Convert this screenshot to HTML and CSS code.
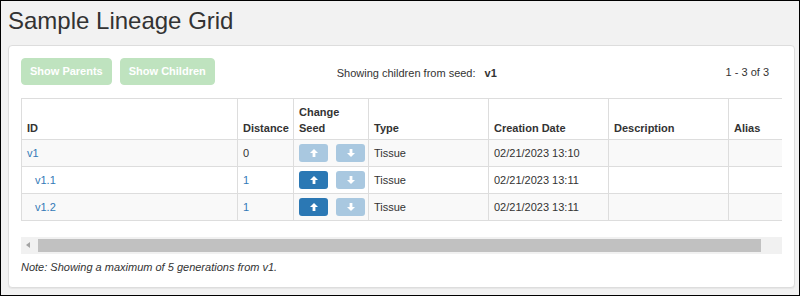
FILE: index.html
```html
<!DOCTYPE html>
<html lang="en">
<head>
    <meta charset="UTF-8">
    <title>Sample Lineage Grid</title>
    <link rel="stylesheet" href="styles.css">
</head>
<body>
    <h1 class="page-title">Sample Lineage Grid</h1>

    <div class="panel">
        <div class="toolbar">
            <button class="btn btn-success" disabled>Show Parents</button>
            <button class="btn btn-success" disabled>Show Children</button>
            <div class="seed-status">Showing children from seed: <b>v1</b></div>
            <div class="pager">1 - 3 of 3</div>
        </div>

        <div class="grid-wrap">
            <table class="lineage-table">
                <colgroup>
                    <col class="col-id">
                    <col class="col-distance">
                    <col class="col-seed">
                    <col class="col-type">
                    <col class="col-date">
                    <col class="col-desc">
                    <col class="col-alias">
                </colgroup>
                <thead>
                    <tr>
                        <th>ID</th>
                        <th>Distance</th>
                        <th>Change Seed</th>
                        <th>Type</th>
                        <th>Creation Date</th>
                        <th>Description</th>
                        <th>Alias</th>
                    </tr>
                </thead>
                <tbody>
                    <tr>
                        <td><a href="#">v1</a></td>
                        <td>0</td>
                        <td class="seed-cell">
                            <button class="seed-btn seed-btn-off" disabled>
                                <svg viewBox="0 0 8 8" width="8" height="8"><path d="M4 0 L8 4 H5.4 V8 H2.6 V4 H0 Z" fill="#fff"/></svg>
                            </button>
                            <button class="seed-btn seed-btn-off" disabled>
                                <svg viewBox="0 0 8 8" width="8" height="8"><path d="M4 8 L8 4 H5.4 V0 H2.6 V4 H0 Z" fill="#fff"/></svg>
                            </button>
                        </td>
                        <td>Tissue</td>
                        <td>02/21/2023 13:10</td>
                        <td></td>
                        <td></td>
                    </tr>
                    <tr>
                        <td><a href="#" class="child">v1.1</a></td>
                        <td><a href="#">1</a></td>
                        <td class="seed-cell">
                            <button class="seed-btn">
                                <svg viewBox="0 0 8 8" width="8" height="8"><path d="M4 0 L8 4 H5.4 V8 H2.6 V4 H0 Z" fill="#fff"/></svg>
                            </button>
                            <button class="seed-btn seed-btn-off" disabled>
                                <svg viewBox="0 0 8 8" width="8" height="8"><path d="M4 8 L8 4 H5.4 V0 H2.6 V4 H0 Z" fill="#fff"/></svg>
                            </button>
                        </td>
                        <td>Tissue</td>
                        <td>02/21/2023 13:11</td>
                        <td></td>
                        <td></td>
                    </tr>
                    <tr>
                        <td><a href="#" class="child">v1.2</a></td>
                        <td><a href="#">1</a></td>
                        <td class="seed-cell">
                            <button class="seed-btn">
                                <svg viewBox="0 0 8 8" width="8" height="8"><path d="M4 0 L8 4 H5.4 V8 H2.6 V4 H0 Z" fill="#fff"/></svg>
                            </button>
                            <button class="seed-btn seed-btn-off" disabled>
                                <svg viewBox="0 0 8 8" width="8" height="8"><path d="M4 8 L8 4 H5.4 V0 H2.6 V4 H0 Z" fill="#fff"/></svg>
                            </button>
                        </td>
                        <td>Tissue</td>
                        <td>02/21/2023 13:11</td>
                        <td></td>
                        <td></td>
                    </tr>
                </tbody>
            </table>
        </div>

        <div class="hscroll">
            <span class="hscroll-arrow"></span>
            <div class="hscroll-thumb"></div>
        </div>

        <div class="note">Note: Showing a maximum of 5 generations from v1.</div>
    </div>
</body>
</html>
```

FILE: styles.css
```css
html {
    height: 100%;
}

body {
    font-family: 'Liberation Sans', Arial, sans-serif;
    font-size: 11px;
    line-height: 16px;
    color: #333;
    background: #f2f2f2;
    margin: 0;
    padding: 6px 4px 0 7px;
    border: 1px solid #000;
    box-sizing: border-box;
    height: 100%;
}

.page-title {
    font-size: 24px;
    font-weight: normal;
    line-height: 27px;
    margin: 0 0 11px 0;
    color: #333;
}

.panel {
    background: #fff;
    border: 1px solid #ddd;
    border-radius: 4px;
    box-shadow: 0 1px 1px rgba(0, 0, 0, 0.05);
    padding: 12px;
}

.toolbar {
    display: flex;
    align-items: center;
    height: 27px;
}

.btn {
    font-family: inherit;
    font-size: 11px;
    font-weight: bold;
    line-height: 15px;
    padding: 5px 8px;
    border-radius: 4px;
    margin-right: 8px;
}

.btn-success {
    background: #bfe3bf;
    border: 1px solid #bfe3bf;
    color: #fff;
}

.seed-status {
    margin-left: 114px;
    padding-top: 2px;
}

.seed-status b {
    margin-left: 6px;
}

.pager {
    margin-left: auto;
    padding-right: 13px;
    padding-top: 1px;
}

.grid-wrap {
    margin-top: 13px;
    overflow: hidden;
}

.lineage-table {
    border-collapse: collapse;
    table-layout: fixed;
    width: 817px;
}

.col-id { width: 216px; }
.col-distance { width: 56px; }
.col-seed { width: 75px; }
.col-type { width: 120px; }
.col-date { width: 120px; }
.col-desc { width: 120px; }
.col-alias { width: 110px; }

.lineage-table th,
.lineage-table td {
    border: 1px solid #ddd;
    text-align: left;
    padding: 5px;
    line-height: 16px;
}

.lineage-table th {
    vertical-align: bottom;
    padding-bottom: 3px;
    font-weight: bold;
}

.lineage-table td {
    height: 16px;
    vertical-align: middle;
}

.lineage-table tbody tr:nth-child(odd) {
    background: #f9f9f9;
}

.lineage-table a {
    color: #337ab7;
    text-decoration: none;
}

.lineage-table a.child {
    padding-left: 8px;
}

.lineage-table td.seed-cell {
    white-space: nowrap;
    padding: 4px 5px;
    height: 18px;
    line-height: 0;
}

.seed-btn {
    display: inline-flex;
    align-items: center;
    justify-content: center;
    width: 29px;
    height: 18px;
    padding: 0;
    margin: 0 5px 0 0;
    border: none;
    border-radius: 3px;
    background: #2b78b4;
    vertical-align: top;
}

.seed-btn-off {
    background: #a9c8e0;
}

.hscroll {
    position: relative;
    margin-top: 16px;
    height: 17px;
    background: #f1f1f1;
}

.hscroll-arrow {
    position: absolute;
    left: 5px;
    top: 5px;
    width: 0;
    height: 0;
    border-top: 3px solid transparent;
    border-bottom: 3px solid transparent;
    border-right: 4px solid #a3a3a3;
}

.hscroll-thumb {
    position: absolute;
    left: 17px;
    right: 21px;
    top: 2px;
    height: 13px;
    background: #c1c1c1;
}

.note {
    margin-top: 5px;
    font-style: italic;
}
```
